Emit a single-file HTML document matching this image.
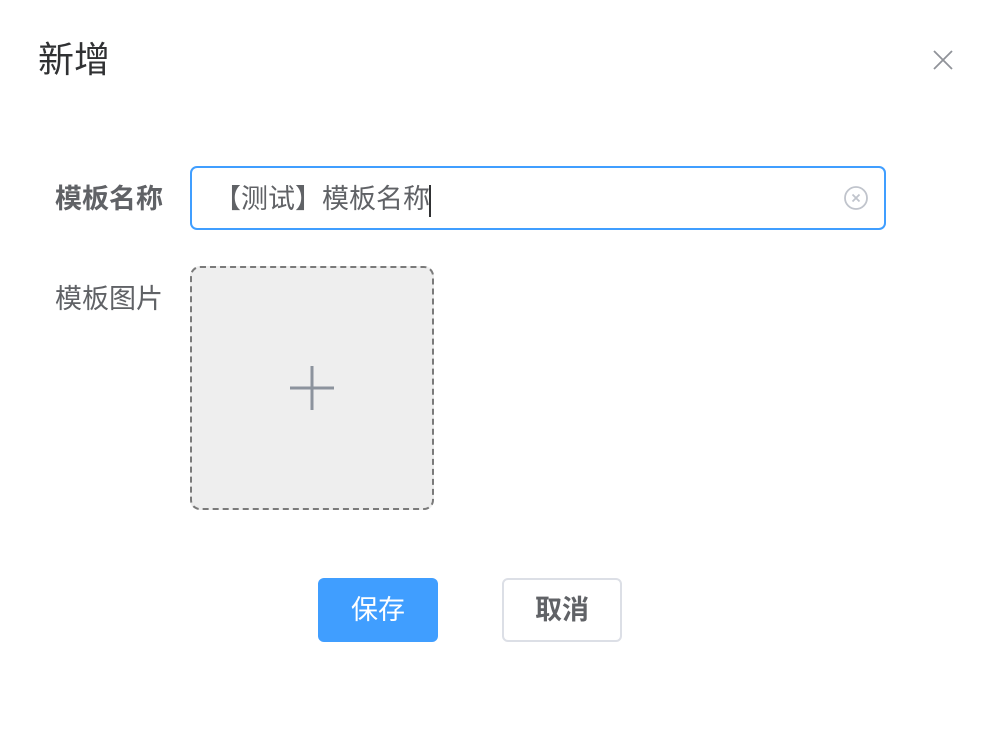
<!DOCTYPE html>
<html><head><meta charset="utf-8"><style>
body{margin:0;width:998px;height:736px;background:#fff;font-family:"Liberation Sans","Noto Sans CJK SC",sans-serif;position:relative;overflow:hidden}
.abs{position:absolute}
</style></head><body>
<div class="abs" style="left:38px;top:37px;font-size:36px;color:#303133;line-height:46px">新增</div>
<svg class="abs" style="left:932px;top:49px" width="22" height="22" viewBox="0 0 22 22"><path d="M2 2L20 20M20 2L2 20" stroke="#909399" stroke-width="1.8"/></svg>
<div class="abs" style="left:55px;top:181px;font-size:27px;font-weight:bold;color:#606266;line-height:36px">模板名称</div>
<div class="abs" style="left:190px;top:166px;width:692px;height:60px;border:2px solid #409eff;border-radius:7px"></div>
<div class="abs" style="left:214px;top:181px;font-size:27px;color:#606266;line-height:36px">【测试】模板名称<span style="display:inline-block;width:2px;height:32px;background:#303133;vertical-align:middle;margin-left:-1px"></span></div>
<svg class="abs" style="left:843px;top:185px" width="26" height="26" viewBox="0 0 26 26"><circle cx="13" cy="13" r="11" fill="none" stroke="#c0c4cc" stroke-width="1.8"/><path d="M9.5 9.5L16.5 16.5M16.5 9.5L9.5 16.5" stroke="#c0c4cc" stroke-width="1.8"/></svg>
<div class="abs" style="left:55px;top:281px;font-size:27px;color:#606266;line-height:36px">模板图片</div>
<div class="abs" style="left:190px;top:266px;width:240px;height:240px;border:2px dashed #7a7a7a;border-radius:10px;background:#eeeeee"></div>
<svg class="abs" style="left:288px;top:364px" width="48" height="48" viewBox="0 0 48 48"><path d="M24 2V46M2 24H46" stroke="#8c939d" stroke-width="3"/></svg>
<div class="abs" style="left:318px;top:578px;width:120px;height:64px;background:#409eff;border-radius:6px;color:#fff;font-size:27px;text-align:center;line-height:64px">保存</div>
<div class="abs" style="left:502px;top:578px;width:116px;height:60px;border:2px solid #dcdfe6;border-radius:6px;color:#606266;font-size:27px;text-align:center;line-height:60px;font-weight:bold">取消</div>
</body></html>
